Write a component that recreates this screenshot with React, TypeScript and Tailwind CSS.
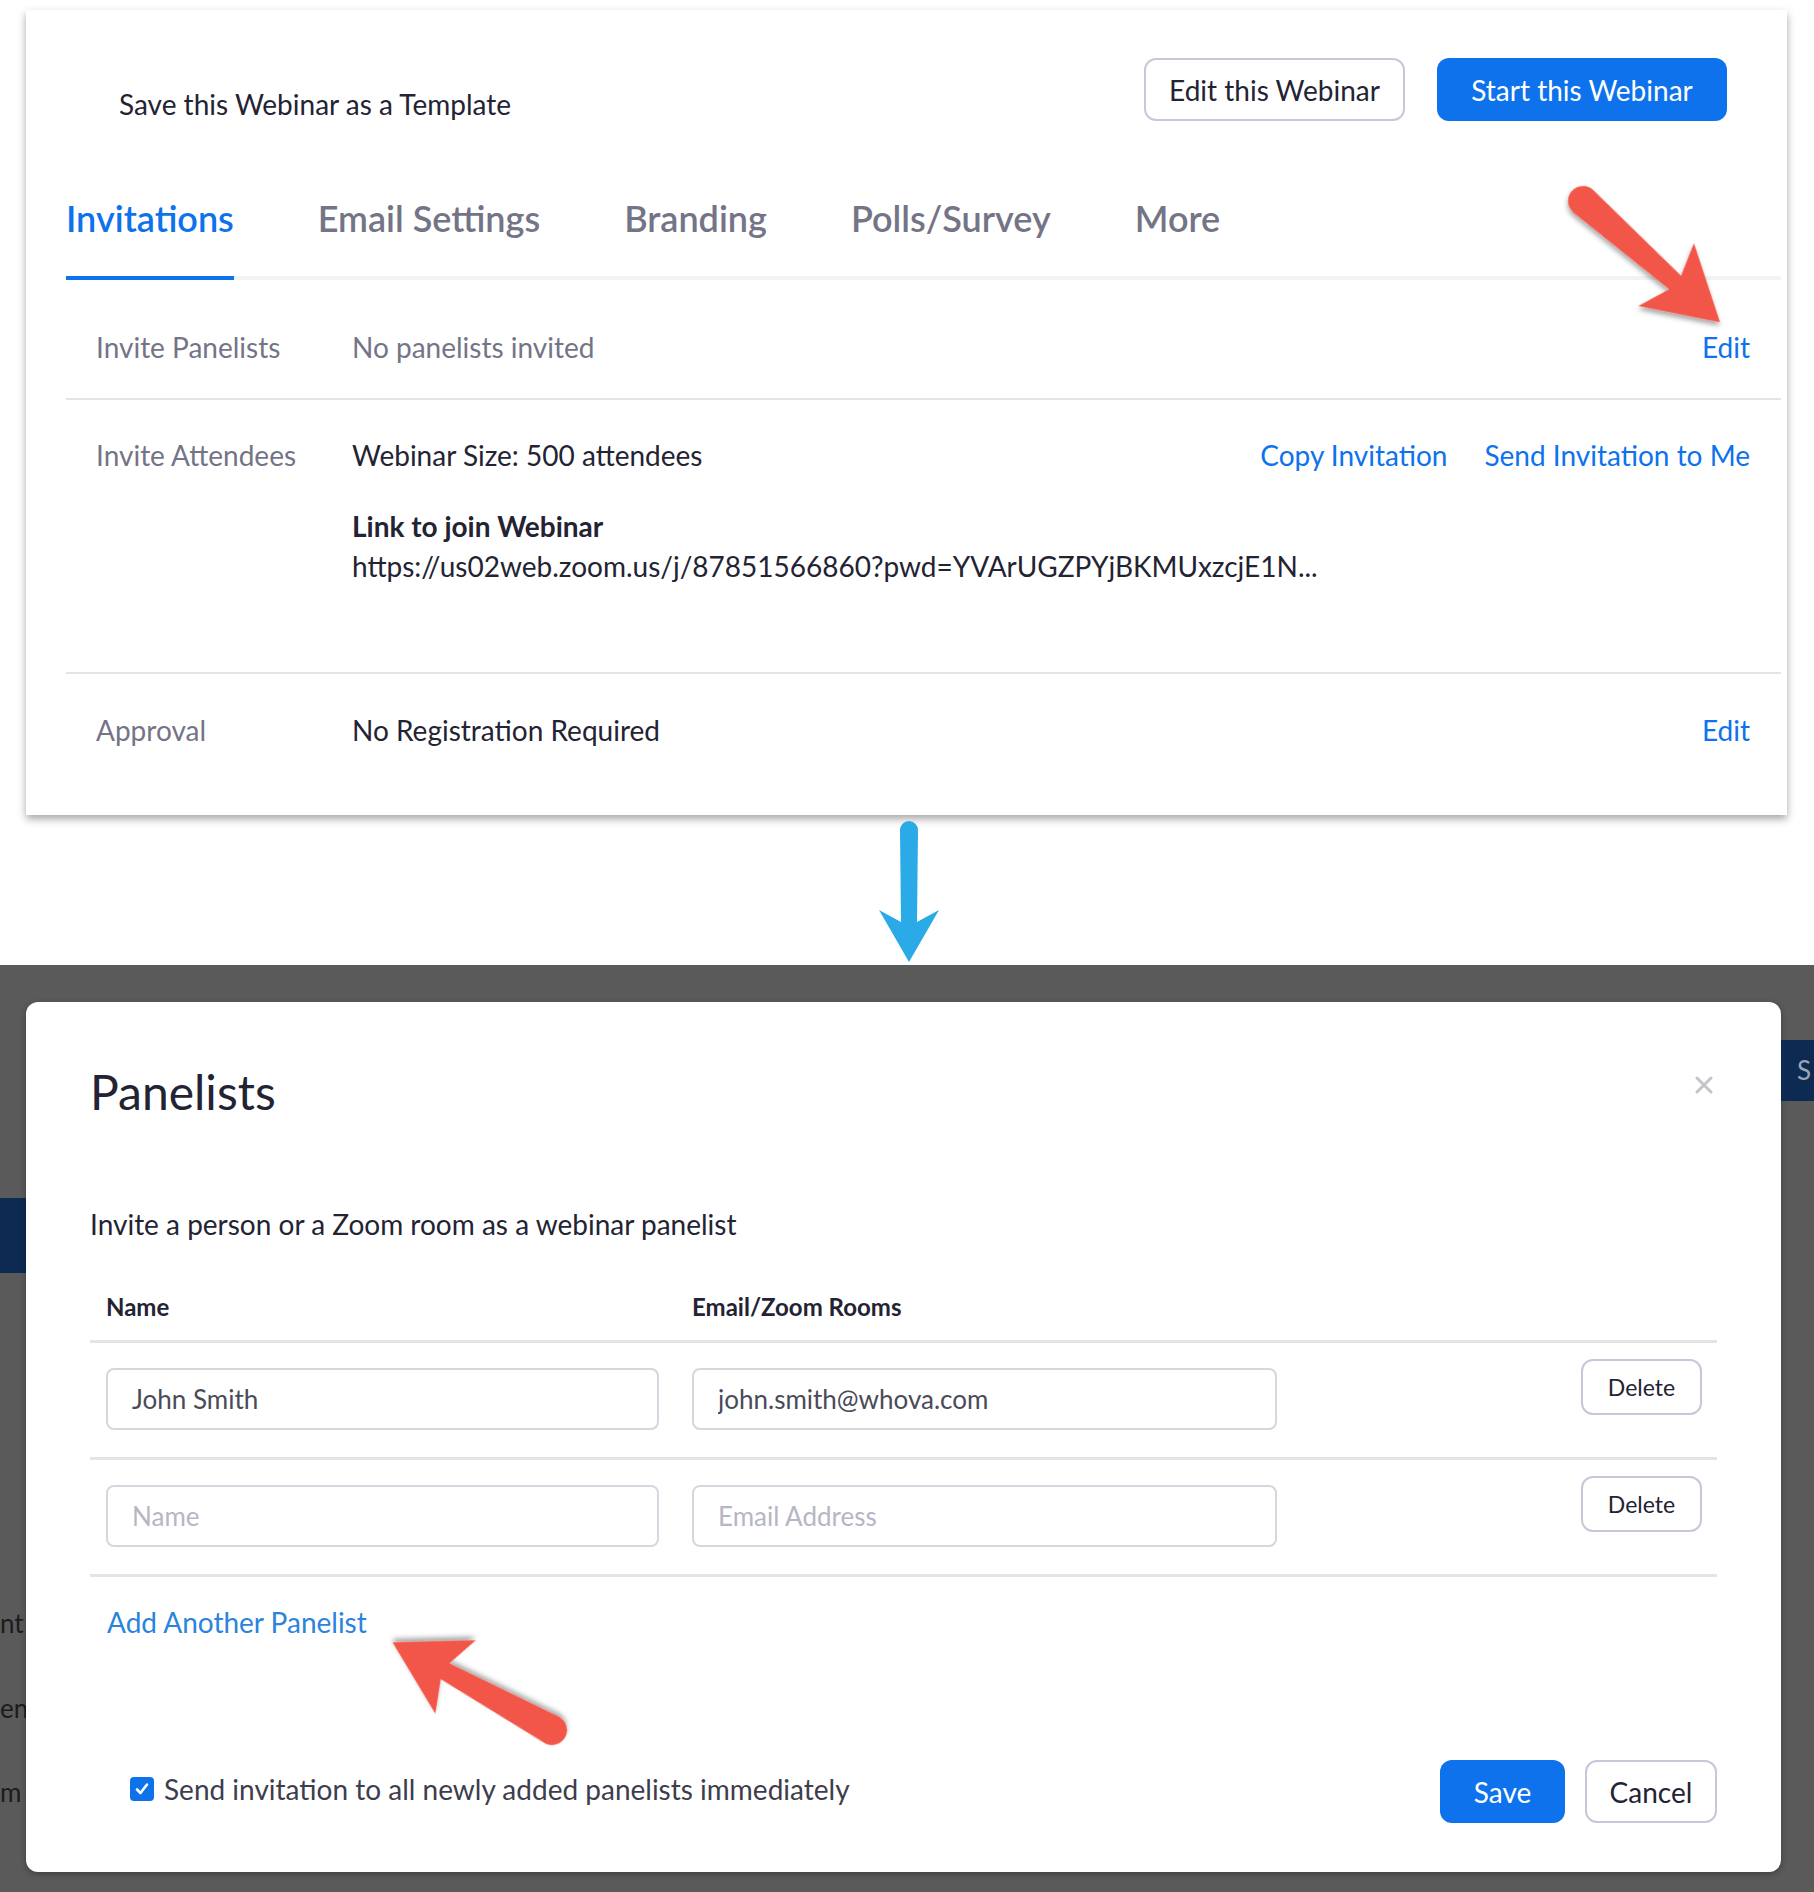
import React from "react";

type ArrowProps = {
  x: number;
  y: number;
  angle: number;
  len: number;
  tail: number;
  neck: number;
  wing: number;
  headLen: number;
  color: string;
  shadow?: boolean;
};

function Arrow({ x, y, angle, len, tail, neck, wing, headLen, color, shadow }: ArrowProps) {
  const base = len - headLen;
  const d = `M 0 ${-tail} L ${base + 12} ${-neck} L ${base} ${-wing} L ${len} 0 L ${base} ${wing} L ${base + 12} ${neck} L 0 ${tail} A ${tail} ${tail} 0 0 1 0 ${-tail} Z`;
  return (
    <g transform={`translate(${x} ${y}) rotate(${angle})`} filter={shadow ? "url(#arrowShadow)" : undefined}>
      <path d={d} fill={color} />
    </g>
  );
}

function TopCard() {
  const tabs = ["Invitations", "Email Settings", "Branding", "Polls/Survey", "More"];
  return (
    <div className="ml-[26px] mt-[10px] w-[1761px] bg-white shadow-[0_4px_8px_rgba(0,0,0,0.35)]">
      <div className="flex items-start justify-between pl-[93px] pr-[60px] pt-[48px]">
        <div className="mt-[30px] text-[28px] leading-[32px] text-[#232333]">Save this Webinar as a Template</div>
        <div className="flex gap-[32px]">
          <button className="flex h-[63px] w-[261px] items-center justify-center rounded-[12px] border-2 border-[#c7c7da] bg-white text-[28px] text-[#232333]">
            Edit this Webinar
          </button>
          <button className="flex h-[63px] w-[290px] items-center justify-center rounded-[12px] bg-[#0e72ed] text-[28px] text-white">
            Start this Webinar
          </button>
        </div>
      </div>

      <div className="ml-[40px] mr-[6px]">
        <div className="mt-[75px] flex items-end gap-[84px] border-b-4 border-[#f3f3f6]">
          {tabs.map((t, i) => (
            <div
              key={t}
              className={
                i === 0
                  ? "-mb-[4px] border-b-4 border-[#0e72ed] pb-[36px] text-[36px] font-semibold leading-[44px] text-[#0e72ed]"
                  : "pb-[36px] text-[36px] font-semibold leading-[44px] text-[#747487]"
              }
            >
              {t}
            </div>
          ))}
        </div>

        <div className="flex border-b-2 border-[#e4e4e8] pb-[35px] pl-[30px] pr-[31px] pt-[51px] text-[28px] leading-[32px]">
          <div className="w-[256px] text-[#747487]">Invite Panelists</div>
          <div className="flex-1 text-[#747487]">No panelists invited</div>
          <div className="text-[#0e72ed]">Edit</div>
        </div>

        <div className="flex border-b-2 border-[#e4e4e8] pb-[90px] pl-[30px] pr-[31px] pt-[39px] text-[28px] leading-[32px]">
          <div className="w-[256px] text-[#747487]">Invite Attendees</div>
          <div className="flex-1 text-[#232333]">
            <div className="flex justify-between">
              <span>Webinar Size: 500 attendees</span>
              <div className="flex gap-[37px] text-[#0e72ed]">
                <span>Copy Invitation</span>
                <span>Send Invitation to Me</span>
              </div>
            </div>
            <div className="mt-[39px] font-bold">Link to join Webinar</div>
            <div className="mt-[8px]">https://us02web.zoom.us/j/87851566860?pwd=YVArUGZPYjBKMUxzcjE1N...</div>
          </div>
        </div>

        <div className="flex pb-[69px] pl-[30px] pr-[31px] pt-[40px] text-[28px] leading-[32px]">
          <div className="w-[256px] text-[#747487]">Approval</div>
          <div className="flex-1 text-[#232333]">No Registration Required</div>
          <div className="text-[#0e72ed]">Edit</div>
        </div>
      </div>
    </div>
  );
}

function PanelistRow({ name, email }: { name: string; email: string }) {
  return (
    <div className="flex items-start border-b-[3px] border-[#e4e4e8] pb-[27px] pl-[16px] pr-[15px] pt-[25px]">
      <input
        defaultValue={name}
        placeholder="Name"
        className="h-[62px] w-[553px] rounded-[8px] border-2 border-[#d6d6de] px-[24px] text-[26px] text-[#4a4a58] outline-none placeholder:text-[#b6b6c4]"
      />
      <input
        defaultValue={email}
        placeholder="Email Address"
        className="ml-[33px] h-[62px] w-[585px] rounded-[8px] border-2 border-[#d6d6de] px-[24px] text-[26px] text-[#4a4a58] outline-none placeholder:text-[#b6b6c4]"
      />
      <button className="-mt-[9px] ml-auto flex h-[56px] w-[121px] items-center justify-center rounded-[12px] border-2 border-[#c7c7da] bg-white text-[23px] text-[#232333]">
        Delete
      </button>
    </div>
  );
}

function PanelistsModal() {
  return (
    <div className="mt-[37px] h-[870px] w-[1755px] rounded-[12px] bg-white px-[64px] pt-[62px] shadow-[0_2px_6px_rgba(0,0,0,0.3)]">
      <div className="flex items-start justify-between">
        <div className="text-[48px] leading-[56px] text-[#232333]">Panelists</div>
        <svg className="mr-[3px] mt-[11px]" width="20" height="20" viewBox="0 0 20 20">
          <path d="M3 3 L17 17 M17 3 L3 17" stroke="#c4c4ca" strokeWidth="3" strokeLinecap="round" />
        </svg>
      </div>
      <div className="mt-[88px] text-[28px] leading-[32px] text-[#232333]">
        Invite a person or a Zoom room as a webinar panelist
      </div>

      <div className="mt-[53px] flex border-b-[3px] border-[#e4e4e8] pb-[19px] pl-[16px] text-[24px] font-bold leading-[28px] text-[#232333]">
        <div className="w-[586px]">Name</div>
        <div>Email/Zoom Rooms</div>
      </div>
      <PanelistRow name="John Smith" email="john.smith@whova.com" />
      <PanelistRow name="" email="" />

      <div className="mt-[29px] pl-[17px] text-[28px] leading-[32px] text-[#2a84dc]">Add Another Panelist</div>

      <div className="mt-[122px] flex items-center justify-between">
        <div className="mb-[5px] flex items-center gap-[10px] pl-[40px]">
          <span className="flex h-[24px] w-[24px] items-center justify-center rounded-[4px] bg-[#0e72ed]">
            <svg width="18" height="18" viewBox="0 0 18 18">
              <path d="M4 9.5 L7.5 13 L14 4.5" fill="none" stroke="white" strokeWidth="2.6" strokeLinecap="round" strokeLinejoin="round" />
            </svg>
          </span>
          <span className="text-[28px] leading-[32px] text-[#3d3d4e]">Send invitation to all newly added panelists immediately</span>
        </div>
        <div className="flex gap-[20px]">
          <button className="flex h-[63px] w-[125px] items-center justify-center rounded-[12px] bg-[#0e72ed] text-[28px] text-white">
            Save
          </button>
          <button className="flex h-[63px] w-[132px] items-center justify-center rounded-[12px] border-2 border-[#c7c7da] bg-white text-[28px] text-[#232333]">
            Cancel
          </button>
        </div>
      </div>
    </div>
  );
}

export default function App() {
  return (
    <div className="relative h-[1892px] w-[1814px] overflow-hidden bg-white font-[Lato,'Liberation_Sans',sans-serif]">
      <TopCard />

      <div className="flex h-[150px] justify-center pl-[4px]">
        <svg width="70" height="150" viewBox="0 0 70 150">
          <Arrow x={35} y={15} angle={90} len={132} tail={9} neck={8} wing={30} headLen={52} color="#2aaae6" />
        </svg>
      </div>

      <div className="flex h-[927px] bg-[#5a5a5a]">
        <div className="w-[26px] text-[26px] leading-[32px] text-[#1c1c1c]">
          <div className="mt-[233px] h-[75px] bg-[#0d2a52]" />
          <div className="mt-[334px] whitespace-nowrap">nt</div>
          <div className="mt-[53px] whitespace-nowrap">en</div>
          <div className="mt-[52px] whitespace-nowrap">m</div>
        </div>
        <PanelistsModal />
        <div className="flex-1">
          <div className="mt-[75px] flex h-[61px] items-center bg-[#0d2a52] pl-[16px] text-[26px] text-[#9aa6b8]">S</div>
        </div>
      </div>

      <svg className="pointer-events-none absolute left-0 top-0" width="1814" height="1892" viewBox="0 0 1814 1892">
        <defs>
          <filter id="arrowShadow" x="-20%" y="-20%" width="140%" height="140%">
            <feDropShadow dx="2" dy="3" stdDeviation="2.5" floodColor="#000" floodOpacity="0.35" />
          </filter>
        </defs>
        <Arrow x={1583} y={201} angle={41.5} len={183} tail={15} neck={9} wing={42} headLen={72} color="#f25749" shadow />
        <Arrow x={552} y={1730} angle={208.8} len={182} tail={15} neck={9} wing={42} headLen={72} color="#f25749" shadow />
      </svg>
    </div>
  );
}
